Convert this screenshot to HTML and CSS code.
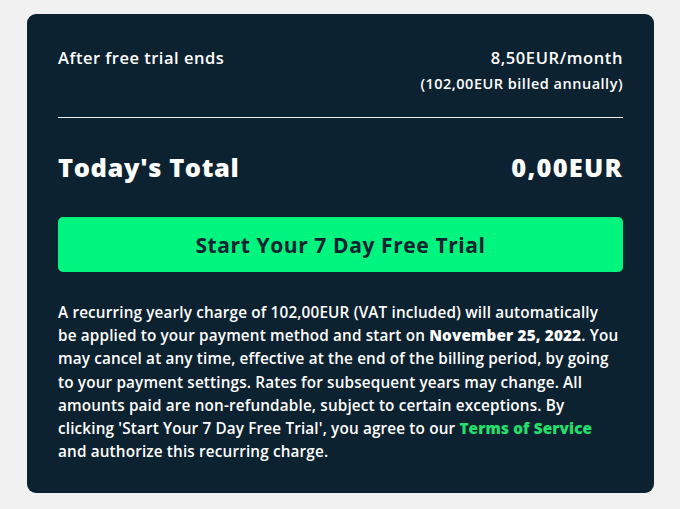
FILE: index.html
```html
<!DOCTYPE html>
<html>
<head>
<meta charset="utf-8">
<link rel="stylesheet" href="styles.css">
</head>
<body>
<div class="card">
  <div class="row-trial">
    <div class="label">After free trial ends</div>
    <div class="price">
      <div class="monthly">8,50EUR/month</div>
      <div class="annual">(102,00EUR billed annually)</div>
    </div>
  </div>
  <hr class="divider">
  <div class="row-total">
    <div>Today's Total</div>
    <div class="amount">0,00EUR</div>
  </div>
  <button class="cta">Start Your 7 Day Free Trial</button>
  <p class="legal">A recurring yearly charge of 102,00EUR (VAT included) will automatically<br>
be applied to your payment method and start on <b>November 25, 2022</b>. You<br>
may cancel at any time, effective at the end of the billing period, by going<br>
to your payment settings. Rates for subsequent years may change. All<br>
amounts paid are non-refundable, subject to certain exceptions. By<br>
clicking 'Start Your 7 Day Free Trial', you agree to our <a class="link" href="#">Terms of Service</a><br>
and authorize this recurring charge.</p>
</div>
</body>
</html>
```

FILE: styles.css
```css
html, body {
  margin: 0;
  padding: 0;
  background: #f1f1f1;
}
body {
  font-family: "Open Sans", "Noto Sans", sans-serif;
  color: #ffffff;
  padding: 14px 26px 16px 27px;
}
.card {
  background: #0d2230;
  border-radius: 9px;
  padding: 33px 31px 28px 31px;
  height: 479px;
  box-sizing: border-box;
}
.row-trial {
  display: flex;
  justify-content: space-between;
  align-items: flex-start;
}
.label {
  font-size: 16.5px;
  font-weight: 600;
  line-height: 22px;
  letter-spacing: 0.5px;
}
.price {
  text-align: right;
}
.monthly {
  font-size: 16.5px;
  font-weight: 600;
  line-height: 22px;
  letter-spacing: 0.6px;
}
.annual {
  font-size: 14.5px;
  font-weight: 600;
  line-height: 20px;
  letter-spacing: 0.5px;
  margin-top: 5px;
}
.divider {
  border: 0;
  border-top: 1.5px solid #e9eef0;
  margin: 23px 0 0 0;
  height: 0;
}
.row-total {
  display: flex;
  justify-content: space-between;
  font-size: 25.5px;
  font-weight: 800;
  line-height: 32px;
  letter-spacing: 0.6px;
  margin-top: 33px;
}
.amount {
  letter-spacing: 1.2px;
}
.cta {
  display: block;
  width: 100%;
  height: 55px;
  margin-top: 34px;
  border: 0;
  border-radius: 5px;
  background: #00f57f;
  color: #0d2230;
  font-family: "Open Sans", "Noto Sans", sans-serif;
  font-size: 21px;
  font-weight: 700;
  letter-spacing: 0.6px;
  cursor: pointer;
}
.legal {
  margin: 29px 0 0 0;
  font-size: 15.3px;
  font-weight: 600;
  line-height: 23.2px;
  letter-spacing: 0.15px;
}
.legal b {
  font-weight: 800;
}
.link {
  color: #22e06b;
  font-weight: 800;
  text-decoration: none;
}
```
